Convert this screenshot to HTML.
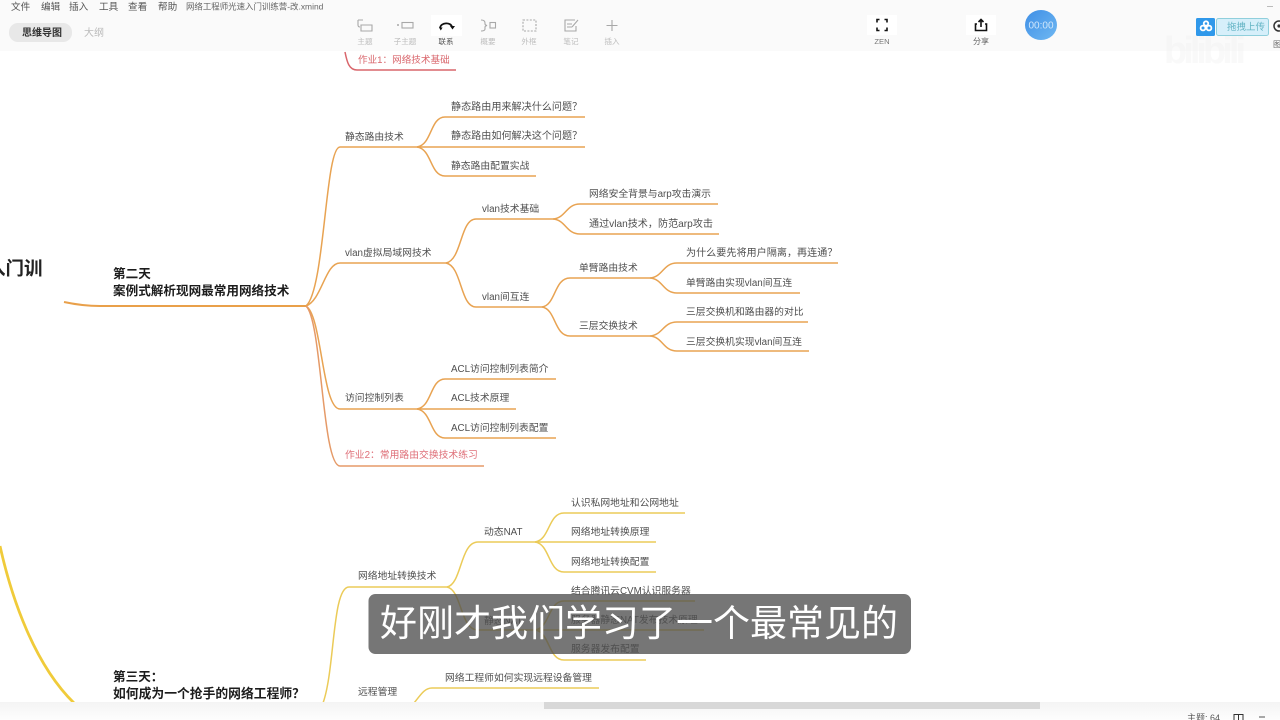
<!DOCTYPE html>
<html lang="zh">
<head>
<meta charset="utf-8">
<title>网络工程师光速入门训练营</title>
<style>
html,body{margin:0;padding:0;width:1280px;height:720px;overflow:hidden;background:#fff}
svg{display:block;position:absolute;left:0;top:0;filter:blur(.35px)}
text{font-family:"Liberation Sans","Noto Sans CJK SC",sans-serif}
tspan.p{font-family:"Noto Sans CJK TC",sans-serif}
.n{font-size:9.8px;fill:#4f4f4f}
.w{font-size:10.1px}
.t{font-size:12.6px;font-weight:700;fill:#1c1c1c}
.m{font-size:9.6px;fill:#555}
.l{font-size:7.6px;fill:#bdbdbd;text-anchor:middle}
.o{fill:none;stroke:#e8a352;stroke-width:1.5}
.y{fill:none;stroke:#ebcb58;stroke-width:1.5}
.i{fill:none;stroke:#a8a8a8;stroke-width:1.1}
.k{fill:none;stroke:#111;stroke-width:1.6}
</style>
</head>
<body>
<svg width="1280" height="720" viewBox="0 0 1280 720" xmlns="http://www.w3.org/2000/svg">
<rect width="1280" height="720" fill="#fff"/>

<!-- left -->
<text x="-13" y="275" font-size="18.5" font-weight="700" fill="#222">入门训</text>
<path d="M64 302C78 305 88 306 100 306H306" fill="none" stroke="#e9a04a" stroke-width="2"/>
<path d="M0 546C12 600 35 665 74 703" fill="none" stroke="#f0cb3a" stroke-width="2.8"/>

<!-- orange branches -->
<path class="o" d="M306 306C325 290 325 147 340 147H417"/>
<path class="o" d="M306 306C322 300 325 263 340 263H446"/>
<path class="o" d="M306 306C322 315 322 409 340 409H417"/>
<path d="M306 306C322 320 322 466 340 466H484" fill="none" stroke="#e59a68" stroke-width="1.5"/>

<path class="o" d="M417 147C432 145 430 117 445 117H585"/>
<path class="o" d="M417 147H585"/>
<path class="o" d="M417 147C432 149 430 176 445 176H536"/>

<path class="o" d="M446 263C462 260 460 219 476 219H553"/>
<path class="o" d="M446 263C462 266 460 307 476 307H542"/>

<path class="o" d="M553 219C566 218 566 204 580 204H718"/>
<path class="o" d="M553 219C566 220 566 234 580 234H719"/>

<path class="o" d="M542 307C556 305 554 278 570 278H650"/>
<path class="o" d="M542 307C556 309 554 336 570 336H650"/>

<path class="o" d="M650 278C663 277 663 263 677 263H838"/>
<path class="o" d="M650 278C663 279 663 293 677 293H800"/>
<path class="o" d="M650 336C663 335 663 322 677 322H808"/>
<path class="o" d="M650 336C663 337 663 351 677 351H809"/>

<path class="o" d="M417 409C432 407 430 379 445 379H556"/>
<path class="o" d="M417 409H516"/>
<path class="o" d="M417 409C432 411 430 438 445 438H556"/>

<!-- yellow branches -->
<path class="y" d="M323 703C335 670 332 587 349 587H447"/>
<path class="y" d="M447 587C462 584 460 542 478 542H535"/>
<path class="y" d="M447 587C462 590 460 630 478 630H535"/>
<path class="y" d="M535 542C550 540 548 513 564 513H685"/>
<path class="y" d="M535 542H656"/>
<path class="y" d="M535 542C550 544 548 572 564 572H656"/>
<path class="y" d="M535 630C550 628 548 601 564 601H695"/>
<path class="y" d="M535 630H704"/>
<path class="y" d="M535 630C550 632 548 660 564 660H646"/>
<path class="y" d="M414 703C420 696 424 688 432 688H599"/>

<!-- red top branch -->
<path d="M345 52C347 62 349 70 357 70H456" fill="none" stroke="#d9666c" stroke-width="1.5"/>
<text x="358" y="63" font-size="9.6" fill="#d9666c">作业1<tspan class="p">：</tspan>网络技术基础</text>
<text x="345" y="458" font-size="9.8" fill="#df6f78">作业2<tspan class="p">：</tspan>常用路由交换技术练习</text>

<!-- titles -->
<text class="t" x="113" y="278">第二天</text>
<text class="t" x="113" y="295">案例式解析现网最常用网络技术</text>
<text class="t" x="113" y="681">第三天<tspan class="p">：</tspan></text>
<text class="t" x="113" y="698" style="font-size:12.8px">如何成为一个抢手的网络工程师<tspan class="p">？</tspan></text>

<!-- nodes -->
<text class="n" x="345" y="140">静态路由技术</text>
<text class="n w" x="451" y="110">静态路由用来解决什么问题<tspan class="p">？</tspan></text>
<text class="n w" x="451" y="139">静态路由如何解决这个问题<tspan class="p">？</tspan></text>
<text class="n" x="451" y="169">静态路由配置实战</text>
<text class="n" x="345" y="256">vlan虚拟局域网技术</text>
<text class="n" x="482" y="212">vlan技术基础</text>
<text class="n" x="482" y="300">vlan间互连</text>
<text class="n" x="589" y="197">网络安全背景与arp攻击演示</text>
<text class="n w" x="589" y="227">通过vlan技术<tspan class="p">，</tspan>防范arp攻击</text>
<text class="n" x="579" y="271">单臂路由技术</text>
<text class="n" x="579" y="329">三层交换技术</text>
<text class="n w" x="686" y="256">为什么要先将用户隔离<tspan class="p">，</tspan>再连通<tspan class="p">？</tspan></text>
<text class="n" x="686" y="286">单臂路由实现vlan间互连</text>
<text class="n" x="686" y="315">三层交换机和路由器的对比</text>
<text class="n" x="686" y="345">三层交换机实现vlan间互连</text>
<text class="n" x="345" y="401">访问控制列表</text>
<text class="n" x="451" y="372">ACL访问控制列表简介</text>
<text class="n" x="451" y="401">ACL技术原理</text>
<text class="n" x="451" y="431">ACL访问控制列表配置</text>
<text class="n" x="358" y="579">网络地址转换技术</text>
<text class="n" x="484" y="535">动态NAT</text>
<text class="n" x="571" y="506">认识私网地址和公网地址</text>
<text class="n" x="571" y="535">网络地址转换原理</text>
<text class="n" x="571" y="565">网络地址转换配置</text>
<text class="n" x="484" y="624">静态NAT</text>
<text class="n" x="571" y="594">结合腾讯云CVM认识服务器</text>
<text class="n" x="571" y="623">服务器静态NAT发布技术原理</text>
<text class="n" x="571" y="652">服务器发布配置</text>
<text class="n" x="358" y="695">远程管理</text>
<text class="n" x="445" y="681">网络工程师如何实现远程设备管理</text>

<!-- toolbar -->
<rect width="1280" height="51" fill="#fafafa"/>
<text class="m" x="11" y="10">文件</text>
<text class="m" x="41" y="10">编辑</text>
<text class="m" x="69" y="10">插入</text>
<text class="m" x="99" y="10">工具</text>
<text class="m" x="128" y="10">查看</text>
<text class="m" x="158" y="10">帮助</text>
<text x="186" y="9.5" font-size="8.45" fill="#666">网络工程师光速入门训练营-改.xmind</text>

<rect x="9" y="23" width="63" height="19" rx="9" fill="#e8e8e8"/>
<text x="22" y="36" font-size="10" font-weight="700" fill="#333">思维导图</text>
<text x="84" y="36" font-size="10" fill="#bbb">大纲</text>

<!-- 主题 -->
<path class="i" d="M358 20V25Q358 27 360 27M363 20H358M361 25H372V31H361Z"/>
<text class="l" x="365" y="44">主题</text>
<!-- 子主题 -->
<circle cx="398" cy="25" r="1" fill="#a8a8a8"/>
<rect class="i" x="402" y="22.5" width="11" height="5.5"/>
<text class="l" x="405" y="44">子主题</text>
<!-- 联系 -->
<rect x="431" y="15" width="31" height="21" fill="#fff"/>
<path d="M440 28C441 22 451 22 452 27" fill="none" stroke="#111" stroke-width="1.8"/>
<path d="M439 27.5l1.8 3 1.8-3zM450 26h5l-2.5 3.5z" fill="#111"/>
<text x="446" y="44" font-size="7.6" fill="#555" text-anchor="middle">联系</text>
<!-- 概要 -->
<path class="i" d="M481 20Q485 20 485 23V24Q485 25 487 25.5Q485 26 485 27V29Q485 31 481 31"/>
<rect class="i" x="490" y="22.5" width="5.5" height="5.5"/>
<text class="l" x="488" y="44">概要</text>
<!-- 外框 -->
<rect class="i" x="523" y="20" width="13" height="11" stroke-dasharray="2 1.4"/>
<text class="l" x="529" y="44">外框</text>
<!-- 笔记 -->
<path class="i" d="M575 20H565V31H576V26M567 24H572M567 27H572M572 27L578 20"/>
<text class="l" x="571" y="44">笔记</text>
<!-- 插入 -->
<path class="i" d="M612 20V31M606.5 25.5H617.5"/>
<text class="l" x="612" y="44">插入</text>

<!-- ZEN -->
<rect x="867" y="15" width="30" height="20" fill="#fff"/>
<path d="M877 22.5V19.5H879.5M884.5 19.5H887V22.5M887 27.5V30.5H884.5M879.5 30.5H877V27.5" fill="none" stroke="#111" stroke-width="1.6"/>
<text x="882" y="44" font-size="7.6" fill="#777" text-anchor="middle">ZEN</text>
<!-- 分享 -->
<rect x="966" y="15" width="30" height="20" fill="#fff"/>
<path class="k" d="M977 24H975.5V30.5H986.5V24H985M981 27V19.5M978.5 22L981 19.5L983.5 22"/>
<text x="981" y="44" font-size="8" fill="#666" text-anchor="middle">分享</text>
<!-- timer -->
<defs>
<linearGradient id="tm" x1="0" y1="0" x2="1" y2="1">
<stop offset="0" stop-color="#3f8fe6"/>
<stop offset="1" stop-color="#6fb8f2"/>
</linearGradient>
</defs>
<ellipse cx="1041" cy="25" rx="16" ry="15" fill="url(#tm)"/>
<text x="1041" y="28.5" font-size="10" fill="#cfe6fb" text-anchor="middle">00:00</text>

<!-- watermark -->
<text x="1164" y="63" font-size="38" font-weight="700" fill="#eeeeee" fill-opacity=".35" textLength="82">bilibili</text>

<!-- upload -->
<path d="M1267 6.5H1273" stroke="#bbb" stroke-width="1"/>
<rect x="1196" y="18" width="19" height="18" rx="1.5" fill="#2f98ea"/>
<g fill="none" stroke="#fff" stroke-width="1.8">
<circle cx="1203" cy="28" r="2.4"/>
<circle cx="1209" cy="28" r="2.4"/>
<circle cx="1206" cy="23.5" r="2.2"/>
</g>
<rect x="1216.5" y="18.5" width="52" height="17" rx="2" fill="#d6effa" stroke="#90cfdc"/>
<text x="1227" y="30" font-size="9.5" fill="#64b4c4">拖拽上传</text>
<circle cx="1279" cy="26" r="5" fill="none" stroke="#333" stroke-width="1.5"/>
<circle cx="1279" cy="26" r="1.6" fill="#333"/>
<text x="1273" y="47" font-size="8" fill="#666">图</text>

<!-- subtitle -->
<rect x="368.5" y="594" width="542.5" height="60" rx="7" fill="#4f4f4f" fill-opacity=".78"/>
<text x="380" y="636" font-size="37" fill="#fff" font-weight="400">好刚才我们学习了一个最常见的</text>

<!-- bottom bar -->
<defs>
<linearGradient id="bb" x1="0" y1="0" x2="0" y2="1">
<stop offset="0" stop-color="#f4f4f4"/>
<stop offset="1" stop-color="#fdfdfd"/>
</linearGradient>
</defs>
<rect y="702" width="1280" height="18" fill="url(#bb)"/>
<rect x="544" y="702" width="496" height="7" fill="#d8d8d8"/>
<text x="1187" y="721" font-size="9" fill="#555">主题: 64</text>
<path d="M1234 714V720M1243 714V720M1234 714.5H1243M1238.5 714V720" stroke="#333" stroke-width="1" fill="none"/>
<path d="M1259 717H1265" stroke="#555" stroke-width="1"/>
</svg>
</body>
</html>
